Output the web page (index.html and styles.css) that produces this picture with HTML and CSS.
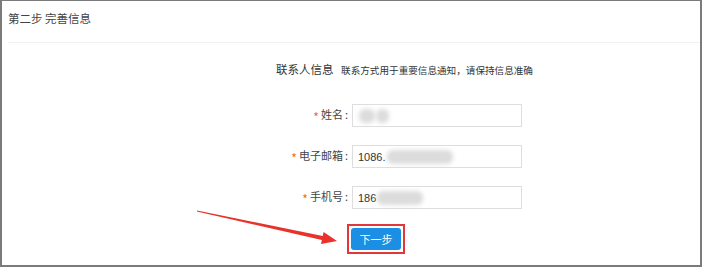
FILE: index.html
```html
<!DOCTYPE html>
<html lang="zh">
<head>
    <meta charset="UTF-8">
    <title>第二步 完善信息</title>
    <link rel="stylesheet" href="styles.css">
</head>
<body>
    <div class="frame">
        <div class="head">第二步 完善信息</div>

        <div class="intro">
            <span class="intro-title">联系人信息</span>
            <span class="intro-sub">联系方式用于重要信息通知，请保持信息准确</span>
        </div>

        <div class="rows">
            <div class="row">
                <label class="label"><i class="req">*</i>姓名<span class="colon">:</span></label>
                <div class="input">
                    <span class="blur" style="width: 16px"></span><span class="blur" style="width: 13px"></span>
                </div>
            </div>
            <div class="row">
                <label class="label"><i class="req">*</i>电子邮箱<span class="colon">:</span></label>
                <div class="input">1086.<span class="blur" style="width: 66px"></span></div>
            </div>
            <div class="row">
                <label class="label"><i class="req">*</i>手机号<span class="colon">:</span></label>
                <div class="input">186<span class="blur" style="width: 46px"></span></div>
            </div>
        </div>

        <div class="actions">
            <div class="highlight">
                <button class="btn">下一步</button>
            </div>
        </div>
    </div>

    <!-- 标注箭头 -->
    <svg class="arrow" width="702" height="267" viewBox="0 0 702 267">
        <polygon fill="#e8322b" points="197.1,210.4 322.7,236.0 323.6,232.0 337,241 321.0,244.0 321.9,240.1 196.9,211.6"/>
    </svg>
</body>
</html>
```

FILE: styles.css
```css
body { margin: 0; position: relative; font-family: "Noto Sans CJK SC", "Liberation Sans", sans-serif; color: #333; background: #fff; }
.frame { width: 702px; height: 267px; box-sizing: border-box; border: 2px solid #7b7b7b; border-top-width: 1px; background: #fff; }
.head { margin-left: 6px; height: 41px; line-height: 34px; font-size: 11.5px; color: #444; border-bottom: 1px solid #f1f1f1; }
.intro { margin: 16px 0 0 274px; line-height: 16px; white-space: nowrap; }
.intro-title { font-size: 11.5px; color: #333; }
.intro-sub { font-size: 9.6px; margin-left: 4px; color: #333; }
.rows { margin-top: 26px; display: flex; flex-direction: column; gap: 18px; }
.row { display: flex; align-items: center; height: 23px; }
.label { width: 350px; text-align: right; font-size: 11px; color: #444; white-space: nowrap; }
.req { font-style: normal; color: #f26a1b; font-size: 12px; margin-right: 2px; vertical-align: -3px; }
.colon { margin: 0 4px 0 2px; }
.input { width: 170px; height: 23px; box-sizing: border-box; border: 1px solid #dedede; padding-left: 5px; display: flex; align-items: center; font-family: "Liberation Sans", sans-serif; font-size: 11px; color: #333; }
.blur { display: inline-block; height: 14px; background: #dcdcdc; border-radius: 6px; filter: blur(2px); margin-left: 1px; }
.actions { margin: 15px 0 0 345px; }
.highlight { display: inline-block; border: 2px solid #e2373a; padding: 2px; }
.btn { display: block; width: 50px; height: 22px; border: none; border-radius: 3px; background: #1a8fe3; color: #fff; font-family: "Noto Sans CJK SC", sans-serif; font-size: 11px; padding: 0; }
.arrow { position: absolute; left: 0; top: 0; pointer-events: none; }
```
